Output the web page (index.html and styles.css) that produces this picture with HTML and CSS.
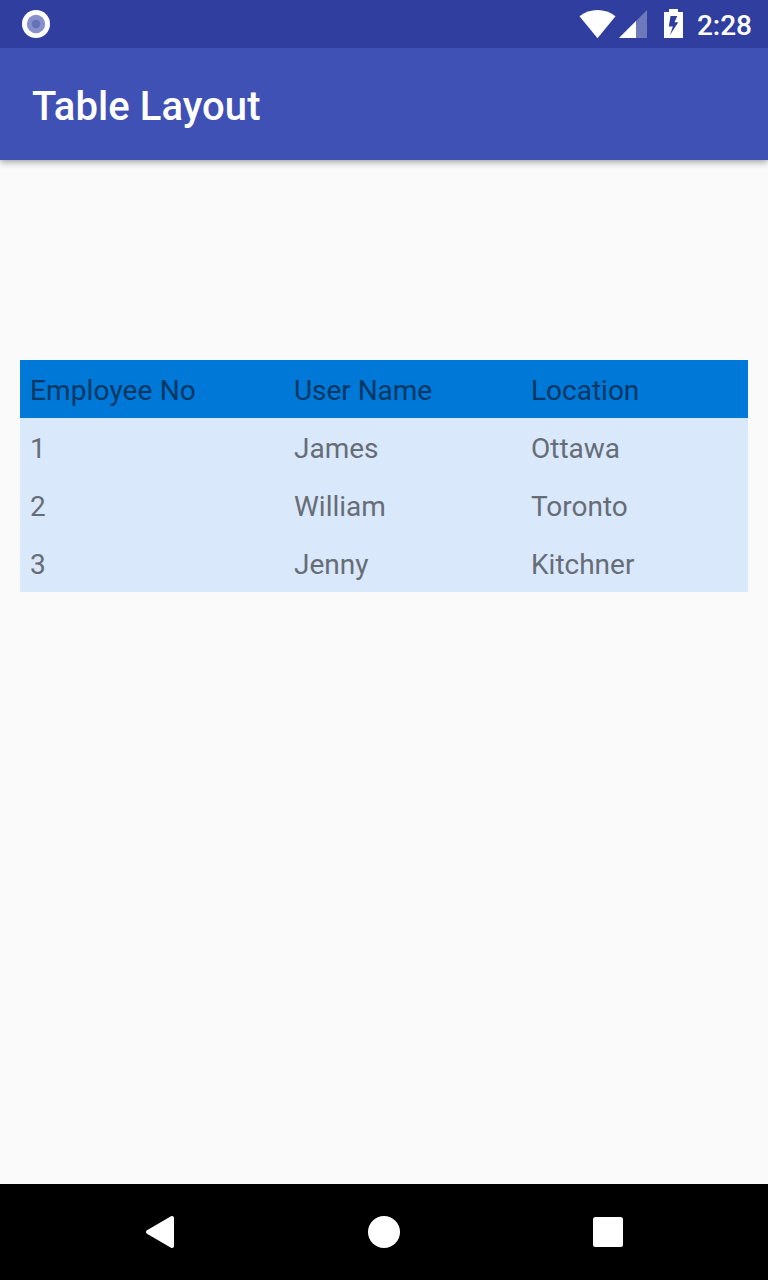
FILE: index.html
```html
<!DOCTYPE html>
<html lang="en">
<head>
<meta charset="utf-8">
<title>Table Layout</title>
<link rel="stylesheet" href="styles.css">
</head>
<body>
<div class="status-bar">
  <svg class="debug-icon" width="28" height="28" viewBox="0 0 28 28"><circle cx="14" cy="14" r="14" fill="#fff"/><circle cx="14" cy="14" r="9.200" fill="#8890cb"/><circle cx="14" cy="14" r="4.200" fill="#6470b8"/></svg>
  <div class="status-right">
    <svg width="108" height="48" viewBox="0 0 108 48">
      <path d="M1.500 16.200C12 8 27 8 37.500 16.200L19.500 38.200Z" fill="#fff"/>
      <path d="M69 10V38H41Z" fill="#fff" fill-opacity=".3"/>
      <path d="M58 21V38H41Z" fill="#fff"/>
      <path fill-rule="evenodd" d="M86 12H91V9H100V12H105V38H86ZM92.500 16L90.800 26.500H94.800L92 35L100.300 22.300H96.500L99.300 16Z" fill="#fff"/>
    </svg>
    <span class="clock">2:28</span>
  </div>
</div>
<header class="app-bar"><h1 class="title">Table Layout</h1></header>
<main class="content">
  <table class="table">
    <thead><tr><th>Employee No</th><th>User Name</th><th>Location</th></tr></thead>
    <tbody>
      <tr><td>1</td><td>James</td><td>Ottawa</td></tr>
      <tr><td>2</td><td>William</td><td>Toronto</td></tr>
      <tr><td>3</td><td>Jenny</td><td>Kitchner</td></tr>
    </tbody>
  </table>
</main>
<nav class="nav-bar">
  <svg width="32" height="36" viewBox="0 0 32 36"><path d="M4 18L28 4V32Z" fill="#fff" stroke="#fff" stroke-width="4" stroke-linejoin="round"/></svg>
  <svg width="32" height="32" viewBox="0 0 32 32"><circle cx="16" cy="16" r="16" fill="#fff"/></svg>
  <svg width="32" height="32" viewBox="0 0 32 32"><rect x="1" y="1" width="30" height="30" rx="2.500" fill="#fff"/></svg>
</nav>
</body>
</html>
```
FILE: styles.css
```css
body {
  margin: 0;
  height: 1280px;
  display: flex;
  flex-direction: column;
  background: #fafafa;
  font-family: Roboto, sans-serif;
}
svg { display: block; }
.status-bar {
  position: relative;
  z-index: 1;
  height: 48px;
  box-sizing: border-box;
  padding: 0 16px 0 22px;
  display: flex;
  align-items: center;
  justify-content: space-between;
  background: #303f9f;
}
.status-right { display: flex; align-items: center; gap: 11px; }
.clock { color: #fff; font-size: 28px; font-weight: 500; line-height: 52px; height: 48px; }
.app-bar {
  height: 112px;
  box-sizing: border-box;
  padding: 5px 32px 0;
  display: flex;
  align-items: center;
  background: #3f51b5;
  box-shadow: 0 2px 7px rgba(0, 0, 0, .38);
}
.title { margin: 0; color: #fff; font-size: 40px; font-weight: 500; letter-spacing: .06px; }
.content { flex: 1; padding: 200px 20px 0; }
.table {
  width: 728px;
  table-layout: fixed;
  border-collapse: collapse;
  font-size: 28px;
  line-height: 38px;
  color: #666d76;
  background: #dae8fc;
}
.table th, .table td {
  padding: 12px 10px 8px;
  text-align: left;
  font-weight: 400;
}
.table th { background: #0078d7; color: #003763; }
.table th:nth-child(1) { width: 244px; letter-spacing: .13px; }
.table th:nth-child(2) { width: 217px; letter-spacing: -.05px; }
.nav-bar {
  height: 96px;
  display: flex;
  align-items: center;
  justify-content: space-between;
  box-sizing: border-box;
  padding: 0 144px;
  background: #000;
}
```
